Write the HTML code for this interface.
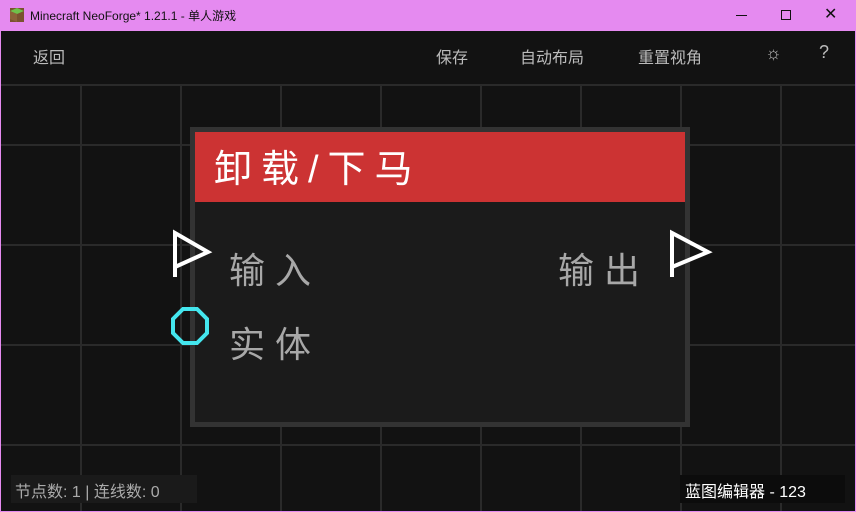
<!DOCTYPE html>
<html><head><meta charset="utf-8"><style>
*{margin:0;padding:0;box-sizing:border-box}
body{width:856px;height:512px;background:#e58af0;position:relative;overflow:hidden;font-family:"Liberation Sans","Noto Sans CJK SC",sans-serif}
.tb{position:absolute;left:0;top:0;width:856px;height:31px}
.tt{position:absolute;left:30px;top:7px;font-size:12px;color:#111}
.c{position:absolute;left:1px;top:31px;width:854px;height:480px;background:#121212;overflow:hidden}
.t{position:absolute;color:#bbb;font-size:16px}
.vl{position:absolute;top:54px;width:2px;height:440px;background:#2a2a2a}
.hl{position:absolute;left:0;width:856px;height:2px;background:#2a2a2a}
.lbl{position:absolute;color:#a8a8a8;font-size:36px;letter-spacing:10px}
</style></head><body>
<div class="tb">
<svg style="position:absolute;left:9px;top:7px" width="16" height="16"><rect x="1" y="1" width="14" height="14" fill="#7a5230"/><polygon points="1,4 8,1 15,4 8,7" fill="#6fc14a"/><polygon points="1,4 8,7 8,15 1,12" fill="#8b6239"/></svg>
<div class="tt">Minecraft NeoForge* 1.21.1 - 单人游戏</div>
<div style="position:absolute;left:736px;top:15px;width:11px;height:1px;background:#111"></div>
<div style="position:absolute;left:781px;top:10px;width:10px;height:10px;border:1px solid #111"></div>
<div style="position:absolute;left:824px;top:4px;font-size:16px;color:#111">✕</div>
</div>
<div class="c">
<div class="vl" style="left:79px"></div><div class="vl" style="left:179px"></div><div class="vl" style="left:279px"></div><div class="vl" style="left:379px"></div><div class="vl" style="left:479px"></div><div class="vl" style="left:579px"></div><div class="vl" style="left:679px"></div><div class="vl" style="left:779px"></div>
<div class="hl" style="top:53px"></div><div class="hl" style="top:113px"></div><div class="hl" style="top:213px"></div><div class="hl" style="top:313px"></div><div class="hl" style="top:413px"></div>
<div style="position:absolute;left:0;top:0;width:854px;height:53px;background:#121212"></div>
<div class="t" style="left:32px;top:13px">返回</div>
<div class="t" style="left:435px;top:13px">保存</div>
<div class="t" style="left:519px;top:13px">自动布局</div>
<div class="t" style="left:637px;top:13px">重置视角</div>
<div class="t" style="left:764px;top:12px;font-size:18px">☼</div>
<div class="t" style="left:818px;top:11px;font-size:18px">?</div>
<div style="position:absolute;left:189px;top:96px;width:500px;height:300px;background:#1b1b1b;border:5px solid #333"></div>
<div style="position:absolute;left:194px;top:101px;width:490px;height:70px;background:#cc3333"></div>
<div style="position:absolute;left:213px;top:107px;color:#fff;font-size:38px;letter-spacing:9px">卸载/下马</div>
<div class="lbl" style="left:228px;top:211px">输入</div>
<div class="lbl" style="left:557px;top:211px">输出</div>
<div class="lbl" style="left:228px;top:285px">实体</div>
<svg style="position:absolute;left:164px;top:164px" width="560" height="160">
<polyline points="10,82 10,38 43,57 10,72" fill="none" stroke="#fff" stroke-width="4" stroke-linejoin="miter"/>
<polyline points="507,82 507,38 543,57 507,72" fill="none" stroke="#fff" stroke-width="4"/>
<polygon points="18,114 32,114 42,124 42,138 32,148 18,148 8,138 8,124" fill="none" stroke="#44e6ee" stroke-width="4"/>
</svg>
<div style="position:absolute;left:10px;top:444px;width:186px;height:28px;background:#1a1a1a;color:#aaa;font-size:16px;padding:3px 4px">节点数: 1 | 连线数: 0</div>
<div style="position:absolute;left:679px;top:444px;width:165px;height:28px;background:#0c0c0c;color:#fff;font-size:16px;padding:3px 5px">蓝图编辑器 - 123</div>
</div>
</body></html>
